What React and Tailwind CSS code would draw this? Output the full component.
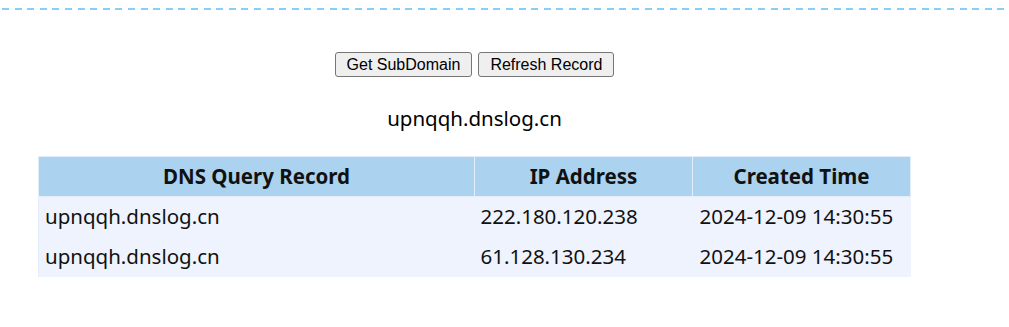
const ROWS = [
  { query: "upnqqh.dnslog.cn", ip: "222.180.120.238", time: "2024-12-09 14:30:55" },
  { query: "upnqqh.dnslog.cn", ip: "61.128.130.234", time: "2024-12-09 14:30:55" },
];

export default function App() {
  return (
    <div className="w-[1009px] h-[327px] bg-white overflow-hidden">
      {/* top dashed rule */}
      <div className="pt-[8px] pl-[2px]">
        <div className="h-[2px] bg-[repeating-linear-gradient(90deg,#87cefa_0_7px,transparent_7px_12.6px)]" />
      </div>

      <div className="ml-[38px] w-[873px] text-center">
        <div className="mt-[42px] flex justify-center gap-[6px] font-['Liberation_Sans',Arial,sans-serif] text-[16px] text-black">
          <button className="h-[25px] px-[11px] bg-[#efefef] border border-[#767676] rounded-[3px] leading-none">
            Get SubDomain
          </button>
          <button className="h-[25px] px-[11px] bg-[#efefef] border border-[#767676] rounded-[3px] leading-none">
            Refresh Record
          </button>
        </div>

        <div className="mt-[27px] font-['Noto_Sans',sans-serif] text-[20.5px] leading-[28px] text-black">
          upnqqh.dnslog.cn
        </div>

        <table className="mt-[24px] w-[873px] border-collapse font-['Noto_Sans',sans-serif] text-[20.5px] text-[#111]">
          <thead>
            <tr className="bg-[#abd2ee] h-[40px]">
              <th className="w-1/2 border border-[#e4eefa] font-bold">DNS Query Record</th>
              <th className="w-1/4 border border-[#e4eefa] font-bold">IP Address</th>
              <th className="w-1/4 border border-[#e4eefa] font-bold">Created Time</th>
            </tr>
          </thead>
          <tbody>
            {ROWS.map((r, i) => (
              <tr key={i} className="bg-[#eef3fd] h-[40px] text-left">
                <td className="pl-[6px] border-l border-[#e4eefa]">{r.query}</td>
                <td className="pl-[6px]">{r.ip}</td>
                <td className="pl-[7px]">{r.time}</td>
              </tr>
            ))}
          </tbody>
        </table>
      </div>
    </div>
  );
}
